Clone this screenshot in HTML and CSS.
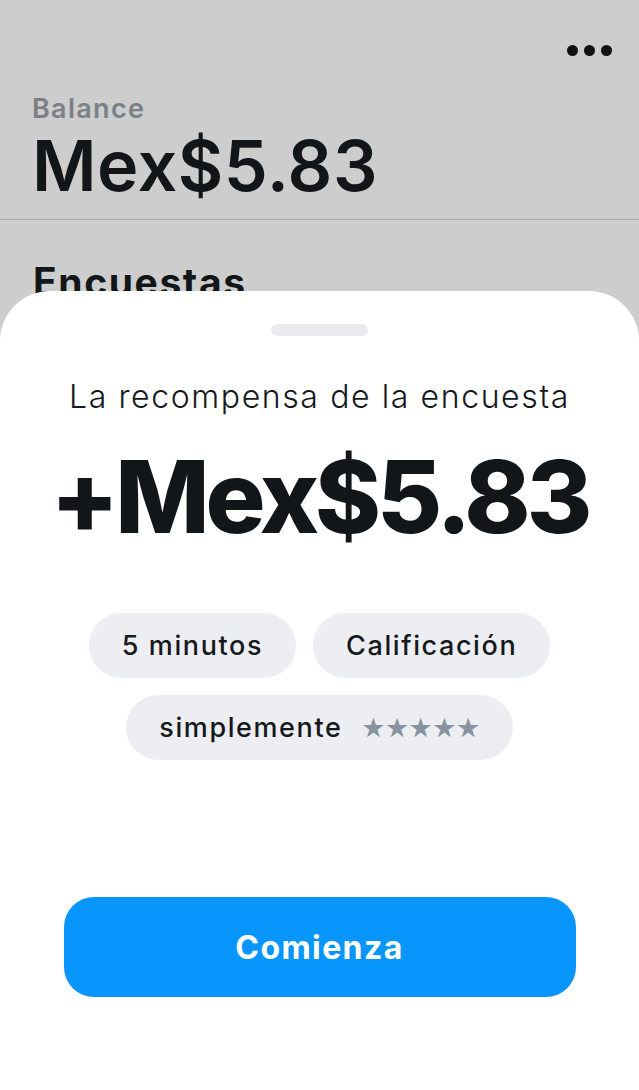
FILE: index.html
```html
<!DOCTYPE html>
<html lang="es">
<head>
<meta charset="utf-8">
<title>Encuesta</title>
<link rel="stylesheet" href="styles.css">
</head>
<body>
<div class="screen">
  <header class="top">
    <div class="menu" aria-label="Más opciones"><span></span><span></span><span></span></div>
    <div class="balance">
      <div class="balance-label">Balance</div>
      <div class="balance-value">Mex$5.83</div>
    </div>
  </header>
  <section class="list">
    <h2 class="list-title">Encuestas</h2>
  </section>

  <div class="sheet">
    <div class="handle"></div>
    <p class="sheet-title">La recompensa de la encuesta</p>
    <div class="reward">+Mex$5.83</div>
    <div class="chips">
      <div class="chip-row">
        <span class="chip">5 minutos</span>
        <span class="chip">Calificación</span>
      </div>
      <div class="chip-row">
        <span class="chip">simplemente <span class="stars">★★★★★</span></span>
      </div>
    </div>
    <button class="start">Comienza</button>
  </div>
</div>
</body>
</html>
```

FILE: styles.css
```css
* { box-sizing: border-box; }
html, body { margin: 0; padding: 0; }
body {
  font-family: Inter, "Liberation Sans", sans-serif;
  background: #cdcdcd;
  color: #131619;
}
.screen {
  position: relative;
  width: 639px;
  height: 1090px;
  overflow: hidden;
  background: #cdcdcd;
}
.top {
  display: flex;
  flex-direction: column;
  border-bottom: 1px solid #a9a9a9;
  padding: 0 32px;
  height: 220px;
}
.menu {
  display: flex;
  justify-content: flex-end;
  gap: 6px;
  padding-top: 45px;
  margin-right: -5px;
}
.menu span {
  width: 11px;
  height: 11px;
  border-radius: 50%;
  background: #111;
}
.balance { margin-top: 38px; }
.balance-label {
  font-size: 27px;
  font-weight: 600;
  color: #7b8087;
  line-height: 30px;
  letter-spacing: 1.3px;
}
.balance-value {
  font-size: 70px;
  font-weight: 600;
  line-height: 84px;
  letter-spacing: 0.5px;
  color: #121619;
}
.list { padding: 42px 33px 0; }
.list-title {
  margin: 0;
  font-size: 39px;
  font-weight: 700;
  line-height: 40px;
  letter-spacing: 1.6px;
  color: #121619;
}
.sheet {
  position: absolute;
  left: 0;
  right: 0;
  top: 291px;
  bottom: 0;
  background: #fff;
  border-radius: 50px 50px 0 0;
  display: flex;
  flex-direction: column;
  align-items: center;
  padding-top: 33px;
}
.handle {
  width: 97px;
  height: 12px;
  border-radius: 6px;
  background: #e9ebee;
}
.sheet-title {
  margin: 41px 0 0;
  font-size: 32px;
  font-weight: 300;
  line-height: 40px;
  letter-spacing: 1.6px;
  color: #16191c;
}
.reward {
  margin-top: 25px;
  font-size: 100px;
  font-weight: 800;
  line-height: 110px;
  letter-spacing: -4px;
  color: #121619;
}
.chips {
  margin-top: 61px;
  display: flex;
  flex-direction: column;
  gap: 17px;
  align-items: center;
}
.chip-row {
  display: flex;
  gap: 17px;
  justify-content: center;
}
.chip {
  display: inline-flex;
  align-items: center;
  height: 65px;
  padding: 0 33px;
  border-radius: 33px;
  background: #eceef1;
  font-size: 27px;
  font-weight: 500;
  letter-spacing: 1.6px;
  color: #16191c;
  white-space: pre;
}
.stars {
  margin-left: 10px;
  font-size: 27px;
  letter-spacing: -0.5px;
  color: #8793a0;
  font-family: "DejaVu Sans", sans-serif;
}
.start {
  margin-top: 137px;
  width: 512px;
  height: 100px;
  border: 0;
  border-radius: 30px;
  background: #0896fd;
  color: #fff;
  font-family: Inter, "Liberation Sans", sans-serif;
  font-size: 32px;
  font-weight: 700;
  letter-spacing: 1.4px;
}
```
